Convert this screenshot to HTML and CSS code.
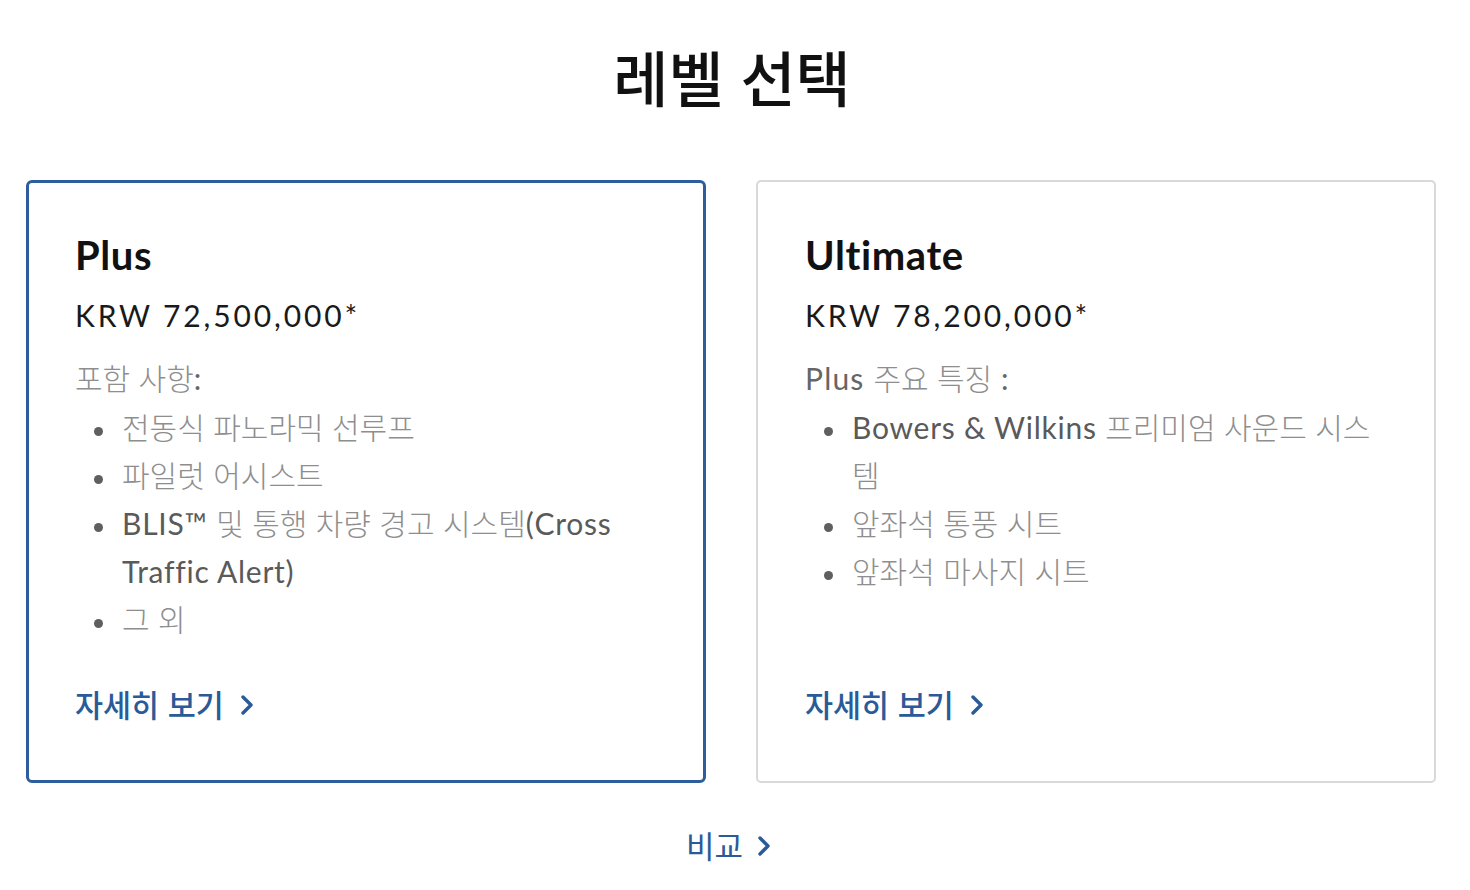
FILE: index.html
```html
<!DOCTYPE html>
<html lang="ko">
<head>
<meta charset="utf-8">
<title>레벨 선택</title>
<link rel="stylesheet" href="styles.css">
</head>
<body>
<main class="page">
  <h1 class="title">레벨 선택</h1>
  <div class="cards">
    <section class="card card-selected">
      <h2 class="name">Plus</h2>
      <p class="price">KRW 72,500,000*</p>
      <p class="lead"><span class="ko">포함 사항</span>:</p>
      <ul class="features">
        <li><span class="ko">전동식 파노라믹 선루프</span></li>
        <li><span class="ko">파일럿 어시스트</span></li>
        <li>BLIS™ <span class="ko">및 통행 차량 경고 시스템</span>(Cross Traffic Alert)</li>
        <li><span class="ko">그 외</span></li>
      </ul>
      <a class="more" href="#">자세히 보기 <svg class="chev" viewBox="0 0 12 20" width="12" height="20"><path d="M2 2 L10 10 L2 18" fill="none" stroke="currentColor" stroke-width="3.4" stroke-linecap="round" stroke-linejoin="round"/></svg></a>
    </section>
    <section class="card">
      <h2 class="name">Ultimate</h2>
      <p class="price">KRW 78,200,000*</p>
      <p class="lead">Plus <span class="ko">주요 특징</span> :</p>
      <ul class="features">
        <li>Bowers &amp; Wilkins <span class="ko">프리미엄 사운드 시스템</span></li>
        <li><span class="ko">앞좌석 통풍 시트</span></li>
        <li><span class="ko">앞좌석 마사지 시트</span></li>
      </ul>
      <a class="more" href="#">자세히 보기 <svg class="chev" viewBox="0 0 12 20" width="12" height="20"><path d="M2 2 L10 10 L2 18" fill="none" stroke="currentColor" stroke-width="3.4" stroke-linecap="round" stroke-linejoin="round"/></svg></a>
    </section>
  </div>
  <div class="footer">
    <a class="compare" href="#">비교 <svg class="chev" viewBox="0 0 12 20" width="12" height="20"><path d="M2 2 L10 10 L2 18" fill="none" stroke="currentColor" stroke-width="3.4" stroke-linecap="round" stroke-linejoin="round"/></svg></a>
  </div>
</main>
</body>
</html>
```

FILE: styles.css
```css
* { box-sizing: border-box; }
html, body { margin: 0; padding: 0; background: #fff; }
body {
  font-family: Lato, "Noto Sans CJK KR", sans-serif;
  color: #111;
}
.page {
  width: 1470px;
  padding: 40px 34px 0 26px;
}
.title {
  margin: 0;
  text-align: center;
  font-family: "Noto Sans CJK KR", sans-serif;
  font-weight: 500;
  font-size: 60px;
  line-height: 72px;
  color: #111;
  padding-left: 2px;
}
.cards {
  display: flex;
  gap: 50px;
  margin-top: 68px;
}
.card {
  width: 680px;
  display: flex;
  flex-direction: column;
  border: 2px solid #d9d9d9;
  border-radius: 5px;
  padding: 49px 47px 57px 47px;
}
.card-selected {
  border: 3px solid #2d5e9b;
  border-radius: 6px;
  padding: 48px 46px 56px 46px;
}
.name {
  margin: 0;
  font-family: Lato, sans-serif;
  font-weight: 700;
  font-size: 40px;
  line-height: 48px;
  color: #111;
  letter-spacing: 0.015em;
}
.price {
  margin: 16px 0 0;
  font-size: 30px;
  line-height: 40px;
  letter-spacing: 0.095em;
  color: #1a1a1a;
}
.lead {
  margin: 19px 0 0;
  font-size: 30px;
  line-height: 48px;
  color: #666;
  letter-spacing: 0.04em;
}
.ko {
  font-family: "Noto Sans CJK KR", sans-serif;
  font-weight: 300;
  color: #8e8e8e;
  letter-spacing: 0;
  font-size: 30px;
  line-height: 1;
}
.features {
  list-style: none;
  margin: 1px 0 41px;
  padding: 0 0 0 47px;
  font-size: 30px;
  line-height: 48px;
  color: #5a5a5a;
  letter-spacing: 0.025em;
}
.features li::before {
  content: "";
  display: inline-block;
  width: 9px;
  height: 9px;
  border-radius: 50%;
  background: #5f5f5f;
  margin-left: -28px;
  margin-right: 19px;
  vertical-align: 3px;
}
.more, .compare {
  display: inline-flex;
  align-items: center;
  gap: 17px;
  color: #2a5b98;
  text-decoration: none;
  font-family: "Noto Sans CJK KR", sans-serif;
  font-weight: 500;
  font-size: 30.5px;
  line-height: 40px;
}
.more { margin-top: auto; align-self: flex-start; }
.chev { display: block; margin-top: 2px; }
.footer {
  display: flex;
  justify-content: center;
  margin-top: 42px;
  padding-right: 6px;
}
.compare { font-weight: 400; gap: 15px; font-size: 31px; }
```
